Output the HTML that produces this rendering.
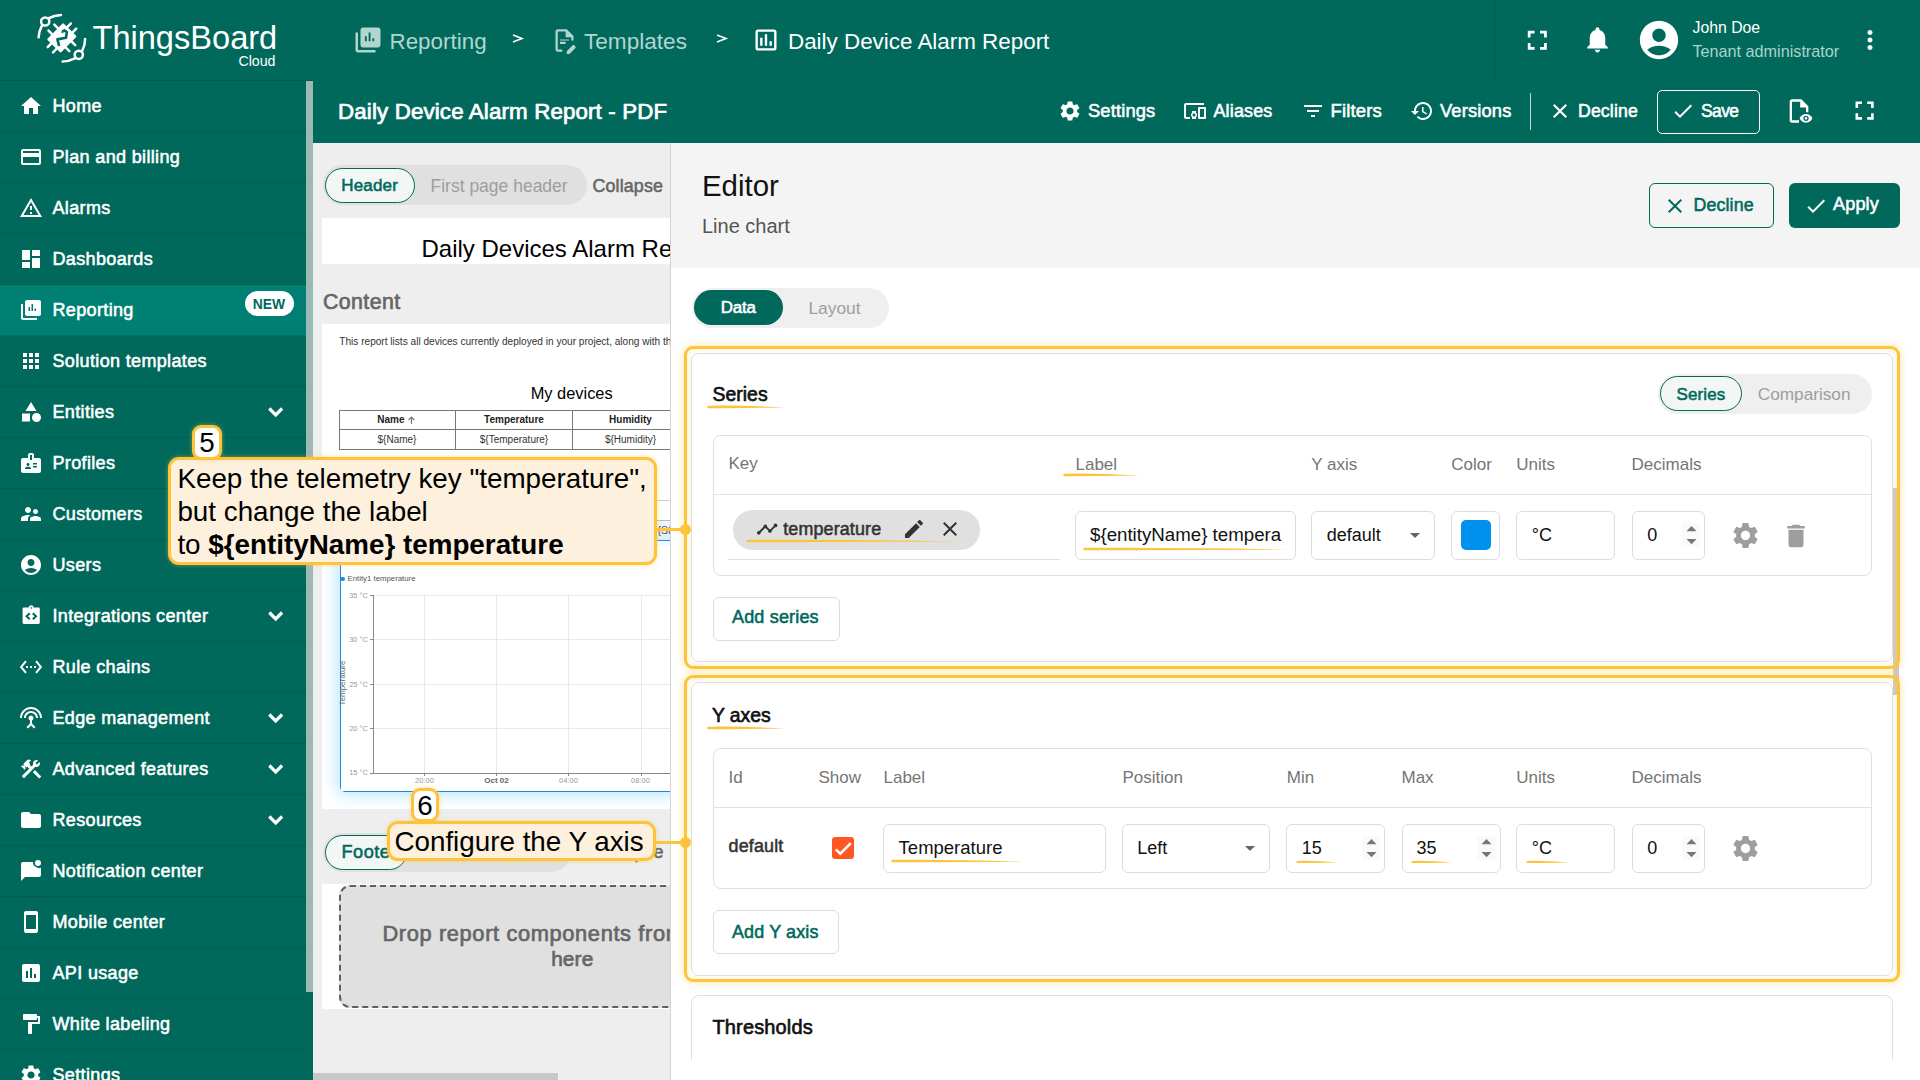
<!DOCTYPE html><html><head><meta charset="utf-8"><style>
*{margin:0;padding:0;box-sizing:border-box}
html,body{width:1920px;height:1080px;overflow:hidden;background:#fff;font-family:"Liberation Sans",sans-serif}
.t{position:absolute;white-space:nowrap}
svg{display:block}
</style></head><body>
<div style="position:absolute;left:0px;top:0px;width:1920px;height:143px;background:#00695c"></div>
<div style="position:absolute;left:0px;top:0px;width:313px;height:1080px;background:#00695c"></div>
<div style="position:absolute;left:1494px;top:0px;width:1px;height:80px;background:rgba(0,0,0,0.13)"></div>
<div style="position:absolute;left:0px;top:80px;width:313px;height:1px;background:rgba(0,0,0,0.12)"></div>
<svg style="position:absolute;left:30px;top:8px;overflow:visible;" width="65" height="62" viewBox="0 0 65 62">
<g fill="none" stroke="#fff" stroke-width="2.5" stroke-linecap="round">
<circle cx="15.2" cy="13.5" r="4.1"/>
<path d="M18.9 10.2 Q 24 7.3 31 6.9"/>
<path d="M11.9 17.6 Q 9 23 8.6 29.3"/>
<circle cx="48.8" cy="46.8" r="4.1"/>
<path d="M52.2 42.8 Q 55.2 37 55.1 31"/>
<path d="M45 50.3 Q 38.5 53.4 32.7 53.6"/>
</g>
<g transform="translate(31.85 29.85) rotate(44.4)">
<rect x="-9.6" y="-11.6" width="19.2" height="23.2" rx="1.2" fill="#fff"/>
<g stroke="#fff" stroke-width="2.5" stroke-linecap="round">
<path d="M-9 -4.2H-14.6M-9 4.2H-14.6M9 -4.2H14.6M9 4.2H14.6M-3.6 -11H-3.6V-16.6M3.9 -11V-16.6M-3.6 11V16.6M3.9 11V16.6"/>
</g>
</g>
<path d="M33.4 21.9 L36.9 24.1 L36 29.7 L27.4 31.4 L29.1 38" fill="none" stroke="#00695c" stroke-width="2.6" stroke-linejoin="round"/>
<path d="M33.4 21.9 L32.2 24.8" fill="none" stroke="#00695c" stroke-width="2.2"/>
</svg>
<div class="t" style="left:92.50px;top:17.10px;line-height:41px;font-size:32.6px;font-weight:400;color:#fff;">ThingsBoard</div>
<div class="t" style="left:-724.50px;width:1000px;text-align:right;top:51.68px;line-height:18px;font-size:14.2px;font-weight:400;color:#fff;">Cloud</div>
<svg style="position:absolute;left:352.7px;top:25px;" width="30" height="30" viewBox="0 0 24 24"><path fill="#b2d5cf" d="M4 6H2v14c0 1.1.9 2 2 2h14v-2H4V6zm16-4H8c-1.1 0-2 .9-2 2v12c0 1.1.9 2 2 2h12c1.1 0 2-.9 2-2V4c0-1.1-.9-2-2-2zM11 13H9.5V9H11v4zm3 0h-1.5V6H14v7zm3 0h-1.5v-2.5H17V13z"/></svg>
<div class="t" style="left:389.50px;top:27.63px;line-height:28px;font-size:22.4px;font-weight:400;color:#b2d5cf;">Reporting</div>
<svg style="position:absolute;left:512px;top:34px;overflow:visible;" width="11" height="9" viewBox="0 0 11 9"><path d="M1 1 L10 4.5 L1 8" fill="none" stroke="#fff" stroke-width="1.6"/></svg>
<svg style="position:absolute;left:551px;top:27px;" width="27" height="27" viewBox="0 0 24 24"><path fill="#b2d5cf" d="M14 2H6c-1.1 0-1.99.9-1.99 2L4 20c0 1.1.89 2 1.99 2H10v-2H6V4h7v5h5v3h2V8l-6-6zM8 12h8v-1H8v1zm0 3h5v-2H8v2zm13.7 2.3l-1-1c-.4-.4-1-.4-1.4 0l-5.3 5.3V24h2.4l5.3-5.3c.4-.4.4-1 0-1.4z"/></svg>
<div class="t" style="left:584.00px;top:27.56px;line-height:28px;font-size:22.6px;font-weight:400;color:#b2d5cf;">Templates</div>
<svg style="position:absolute;left:716px;top:34px;overflow:visible;" width="11" height="9" viewBox="0 0 11 9"><path d="M1 1 L10 4.5 L1 8" fill="none" stroke="#fff" stroke-width="1.6"/></svg>
<svg style="position:absolute;left:752px;top:26px;" width="28" height="28" viewBox="0 0 24 24"><path fill="#fff" d="M19 3H5c-1.1 0-2 .9-2 2v14c0 1.1.9 2 2 2h14c1.1 0 2-.9 2-2V5c0-1.1-.9-2-2-2zm0 16H5V5h14v14zM9 10H7v7h2v-7zm4-3h-2v10h2V7zm4 6h-2v4h2v-4z"/></svg>
<div class="t" style="left:788.00px;top:27.63px;line-height:28px;font-size:22.4px;font-weight:400;color:#fff;">Daily Device Alarm Report</div>
<svg style="position:absolute;left:1521.2px;top:24.2px;" width="32.6" height="32.6" viewBox="0 0 24 24"><path fill="#fff" d="M7 14H5v5h5v-2H7v-3zm-2-4h2V7h3V5H5v5zm12 7h-3v2h5v-5h-2v3zM14 5v2h3v3h2V5h-5z"/></svg>
<svg style="position:absolute;left:1581.8px;top:24.2px;" width="31" height="31" viewBox="0 0 24 24"><path fill="#fff" d="M12 22c1.1 0 2-.9 2-2h-4c0 1.1.89 2 2 2zm6-6v-5c0-3.07-1.64-5.64-4.5-6.32V4c0-.83-.67-1.5-1.5-1.5s-1.5.67-1.5 1.5v.68C7.63 5.36 6 7.92 6 11v5l-2 2v1h16v-1l-2-2z"/></svg>
<svg style="position:absolute;left:1636px;top:17px;" width="46" height="46" viewBox="0 0 24 24"><path fill="#fff" d="M12 2C6.48 2 2 6.48 2 12s4.48 10 10 10 10-4.48 10-10S17.52 2 12 2zm0 4c1.93 0 3.5 1.57 3.5 3.5S13.93 13 12 13s-3.5-1.57-3.5-3.5S10.07 6 12 6zm0 14c-2.03 0-4.43-.82-6.14-2.88C7.55 15.8 9.68 15 12 15s4.45.8 6.14 2.12C16.43 19.18 14.03 20 12 20z"/></svg>
<div class="t" style="left:1692.50px;top:17.52px;line-height:20px;font-size:15.8px;font-weight:400;color:#fff;">John Doe</div>
<div class="t" style="left:1692.50px;top:41.38px;line-height:20px;font-size:16.2px;font-weight:400;color:#a9d4cd;">Tenant administrator</div>
<svg style="position:absolute;left:1855px;top:25px;" width="30" height="30" viewBox="0 0 24 24"><path fill="#fff" d="M12 8c1.1 0 2-.9 2-2s-.9-2-2-2-2 .9-2 2 .9 2 2 2zm0 2c-1.1 0-2 .9-2 2s.9 2 2 2 2-.9 2-2-.9-2-2-2zm0 6c-1.1 0-2 .9-2 2s.9 2 2 2 2-.9 2-2-.9-2-2-2z"/></svg>
<div style="position:absolute;left:0px;top:131px;width:306px;height:1px;background:rgba(0,0,0,0.1)"></div>
<svg style="position:absolute;left:19px;top:93.5px;" width="24" height="24" viewBox="0 0 24 24"><path fill="#fff" d="M10 20v-6h4v6h5v-8h3L12 3 2 12h3v8z"/></svg>
<div class="t" style="left:52.50px;top:94.56px;line-height:22px;font-size:18px;font-weight:400;color:#fff;-webkit-text-stroke:0.55px #fff;letter-spacing:0.350px;">Home</div>
<div style="position:absolute;left:0px;top:182px;width:306px;height:1px;background:rgba(0,0,0,0.1)"></div>
<svg style="position:absolute;left:19px;top:144.5px;" width="24" height="24" viewBox="0 0 24 24"><path fill="#fff" d="M20 4H4c-1.11 0-1.99.89-1.99 2L2 18c0 1.11.89 2 2 2h16c1.11 0 2-.89 2-2V6c0-1.11-.89-2-2-2zm0 14H4v-6h16v6zm0-10H4V6h16v2z"/></svg>
<div class="t" style="left:52.50px;top:145.56px;line-height:22px;font-size:18px;font-weight:400;color:#fff;-webkit-text-stroke:0.55px #fff;letter-spacing:0.350px;">Plan and billing</div>
<div style="position:absolute;left:0px;top:233px;width:306px;height:1px;background:rgba(0,0,0,0.1)"></div>
<svg style="position:absolute;left:19px;top:195.5px;" width="24" height="24" viewBox="0 0 24 24"><path fill="#fff" d="M12 5.99L19.53 19H4.47L12 5.99M12 2L1 21h22L12 2zm1 14h-2v2h2v-2zm0-6h-2v4h2v-4z"/></svg>
<div class="t" style="left:52.50px;top:196.56px;line-height:22px;font-size:18px;font-weight:400;color:#fff;-webkit-text-stroke:0.55px #fff;letter-spacing:0.350px;">Alarms</div>
<div style="position:absolute;left:0px;top:284px;width:306px;height:1px;background:rgba(0,0,0,0.1)"></div>
<svg style="position:absolute;left:19px;top:246.5px;" width="24" height="24" viewBox="0 0 24 24"><path fill="#fff" d="M3 13h8V3H3v10zm0 8h8v-6H3v6zm10 0h8V11h-8v10zm0-18v6h8V3h-8z"/></svg>
<div class="t" style="left:52.50px;top:247.56px;line-height:22px;font-size:18px;font-weight:400;color:#fff;-webkit-text-stroke:0.55px #fff;letter-spacing:0.350px;">Dashboards</div>
<div style="position:absolute;left:0px;top:284.5px;width:306px;height:51px;background:#007f73"></div>
<div style="position:absolute;left:0px;top:335px;width:306px;height:1px;background:rgba(0,0,0,0.1)"></div>
<svg style="position:absolute;left:19px;top:297.5px;" width="24" height="24" viewBox="0 0 24 24"><path fill="#fff" d="M4 6H2v14c0 1.1.9 2 2 2h14v-2H4V6zm16-4H8c-1.1 0-2 .9-2 2v12c0 1.1.9 2 2 2h12c1.1 0 2-.9 2-2V4c0-1.1-.9-2-2-2zM11 13H9.5V9H11v4zm3 0h-1.5V6H14v7zm3 0h-1.5v-2.5H17V13z"/></svg>
<div class="t" style="left:52.50px;top:298.56px;line-height:22px;font-size:18px;font-weight:400;color:#fff;-webkit-text-stroke:0.55px #fff;letter-spacing:0.350px;">Reporting</div>
<div style="position:absolute;left:245px;top:290.5px;width:48.5px;height:25px;background:#fff;border-radius:13px"></div>
<div class="t" style="left:-231.00px;width:1000px;text-align:center;top:295.88px;line-height:17px;font-size:13.9px;font-weight:700;color:#00695c;">NEW</div>
<div style="position:absolute;left:0px;top:386px;width:306px;height:1px;background:rgba(0,0,0,0.1)"></div>
<svg style="position:absolute;left:19px;top:348.5px;" width="24" height="24" viewBox="0 0 24 24"><path fill="#fff" d="M4 8h4V4H4v4zm6 12h4v-4h-4v4zm-6 0h4v-4H4v4zm0-6h4v-4H4v4zm6 0h4v-4h-4v4zm6-10v4h4V4h-4zm-6 4h4V4h-4v4zm6 6h4v-4h-4v4zm0 6h4v-4h-4v4z"/></svg>
<div class="t" style="left:52.50px;top:349.56px;line-height:22px;font-size:18px;font-weight:400;color:#fff;-webkit-text-stroke:0.55px #fff;letter-spacing:0.350px;">Solution templates</div>
<div style="position:absolute;left:0px;top:437px;width:306px;height:1px;background:rgba(0,0,0,0.1)"></div>
<svg style="position:absolute;left:19px;top:399.5px;" width="24" height="24" viewBox="0 0 24 24"><path fill="#fff" d="M12 2l-5.5 9h11zM17.5 13a4.5 4.5 0 1 0 0 9 4.5 4.5 0 1 0 0-9zM3 13.5h8v8H3z"/></svg>
<div class="t" style="left:52.50px;top:400.56px;line-height:22px;font-size:18px;font-weight:400;color:#fff;-webkit-text-stroke:0.55px #fff;letter-spacing:0.350px;">Entities</div>
<svg style="position:absolute;left:265px;top:403.5px;overflow:visible;" width="22" height="14" viewBox="0 0 22 14"><path d="M4.3 4.5 L10.7 10.9 L17.1 4.5" fill="none" stroke="#fff" stroke-width="3.2"/></svg>
<div style="position:absolute;left:0px;top:488px;width:306px;height:1px;background:rgba(0,0,0,0.1)"></div>
<svg style="position:absolute;left:19px;top:450.5px;" width="24" height="24" viewBox="0 0 24 24"><path fill="#fff" d="M20 7h-5V4c0-1.1-.9-2-2-2h-2c-1.1 0-2 .9-2 2v3H4c-1.1 0-2 .9-2 2v11c0 1.1.9 2 2 2h16c1.1 0 2-.9 2-2V9c0-1.1-.9-2-2-2zM11 4h2v5h-2V4zM9 12c.83 0 1.5.67 1.5 1.5S9.83 15 9 15s-1.5-.67-1.5-1.5S8.17 12 9 12zm3 6H6v-.43c0-.6.36-1.15.92-1.39.64-.28 1.34-.43 2.08-.43s1.44.15 2.08.43c.55.24.92.78.92 1.39V18zm6-1.5h-4V15h4v1.5zm0-3h-4V12h4v1.5z"/></svg>
<div class="t" style="left:52.50px;top:451.56px;line-height:22px;font-size:18px;font-weight:400;color:#fff;-webkit-text-stroke:0.55px #fff;letter-spacing:0.350px;">Profiles</div>
<div style="position:absolute;left:0px;top:539px;width:306px;height:1px;background:rgba(0,0,0,0.1)"></div>
<svg style="position:absolute;left:19px;top:501.5px;" width="24" height="24" viewBox="0 0 24 24"><path fill="#fff" d="M16.5 12c1.38 0 2.49-1.12 2.49-2.5S17.88 7 16.5 7C15.12 7 14 8.12 14 9.5s1.12 2.5 2.5 2.5zM9 11c1.66 0 2.99-1.34 2.99-3S10.66 5 9 5C7.34 5 6 6.34 6 8s1.34 3 3 3zm7.5 3c-1.83 0-5.5.92-5.5 2.75V19h11v-2.25c0-1.83-3.67-2.75-5.5-2.75zM9 13c-2.34 0-7 1.17-7 3.5V19h7v-2.25c0-.85.33-2.34 2.37-3.47C10.5 13.1 9.66 13 9 13z"/></svg>
<div class="t" style="left:52.50px;top:502.56px;line-height:22px;font-size:18px;font-weight:400;color:#fff;-webkit-text-stroke:0.55px #fff;letter-spacing:0.350px;">Customers</div>
<div style="position:absolute;left:0px;top:590px;width:306px;height:1px;background:rgba(0,0,0,0.1)"></div>
<svg style="position:absolute;left:19px;top:552.5px;" width="24" height="24" viewBox="0 0 24 24"><path fill="#fff" d="M12 2C6.48 2 2 6.48 2 12s4.48 10 10 10 10-4.48 10-10S17.52 2 12 2zm0 4c1.93 0 3.5 1.57 3.5 3.5S13.93 13 12 13s-3.5-1.57-3.5-3.5S10.07 6 12 6zm0 14c-2.03 0-4.43-.82-6.14-2.88C7.55 15.8 9.68 15 12 15s4.45.8 6.14 2.12C16.43 19.18 14.03 20 12 20z"/></svg>
<div class="t" style="left:52.50px;top:553.56px;line-height:22px;font-size:18px;font-weight:400;color:#fff;-webkit-text-stroke:0.55px #fff;letter-spacing:0.350px;">Users</div>
<div style="position:absolute;left:0px;top:641px;width:306px;height:1px;background:rgba(0,0,0,0.1)"></div>
<svg style="position:absolute;left:22px;top:605.0px;overflow:visible;" width="18" height="21" viewBox="0 0 18 21"><rect x="0.6" y="2.4" width="17.2" height="16.5" rx="1.3" fill="#fff"/><circle cx="9.2" cy="2.6" r="2.4" fill="#fff"/><circle cx="9.2" cy="3" r="0.8" fill="#00695c"/><path d="M7.8 8.3 L4.6 11.3 L7.8 14.3 M10.8 8.3 L14 11.3 L10.8 14.3" fill="none" stroke="#00695c" stroke-width="2"/></svg>
<div class="t" style="left:52.50px;top:604.56px;line-height:22px;font-size:18px;font-weight:400;color:#fff;-webkit-text-stroke:0.55px #fff;letter-spacing:0.350px;">Integrations center</div>
<svg style="position:absolute;left:265px;top:607.5px;overflow:visible;" width="22" height="14" viewBox="0 0 22 14"><path d="M4.3 4.5 L10.7 10.9 L17.1 4.5" fill="none" stroke="#fff" stroke-width="3.2"/></svg>
<div style="position:absolute;left:0px;top:692px;width:306px;height:1px;background:rgba(0,0,0,0.1)"></div>
<svg style="position:absolute;left:19px;top:654.5px;" width="24" height="24" viewBox="0 0 24 24"><path fill="#fff" d="M7.77 6.76L6.23 5.48.82 12l5.41 6.52 1.54-1.28L3.42 12l4.35-5.24zM7 13h2v-2H7v2zm10-2h-2v2h2v-2zm-6 2h2v-2h-2v2zm6.77-7.52l-1.54 1.28L20.58 12l-4.35 5.24 1.54 1.28L23.18 12l-5.41-6.52z"/></svg>
<div class="t" style="left:52.50px;top:655.56px;line-height:22px;font-size:18px;font-weight:400;color:#fff;-webkit-text-stroke:0.55px #fff;letter-spacing:0.350px;">Rule chains</div>
<div style="position:absolute;left:0px;top:743px;width:306px;height:1px;background:rgba(0,0,0,0.1)"></div>
<svg style="position:absolute;left:19px;top:705.5px;" width="24" height="24" viewBox="0 0 24 24"><path fill="#fff" d="M12 5c-3.87 0-7 3.13-7 7h2c0-2.76 2.24-5 5-5s5 2.24 5 5h2c0-3.87-3.13-7-7-7zm1 9.29c.88-.39 1.5-1.26 1.5-2.29 0-1.38-1.12-2.5-2.5-2.5S9.5 10.62 9.5 12c0 1.02.62 1.9 1.5 2.29v3.3L7.59 21 9 22.41l3-3 3 3L16.41 21 13 17.59v-3.3zM12 1C5.93 1 1 5.93 1 12h2c0-4.97 4.03-9 9-9s9 4.03 9 9h2c0-6.07-4.93-11-11-11z"/></svg>
<div class="t" style="left:52.50px;top:706.56px;line-height:22px;font-size:18px;font-weight:400;color:#fff;-webkit-text-stroke:0.55px #fff;letter-spacing:0.350px;">Edge management</div>
<svg style="position:absolute;left:265px;top:709.5px;overflow:visible;" width="22" height="14" viewBox="0 0 22 14"><path d="M4.3 4.5 L10.7 10.9 L17.1 4.5" fill="none" stroke="#fff" stroke-width="3.2"/></svg>
<div style="position:absolute;left:0px;top:794px;width:306px;height:1px;background:rgba(0,0,0,0.1)"></div>
<svg style="position:absolute;left:19px;top:756.5px;" width="24" height="24" viewBox="0 0 24 24"><path fill="#fff" d="M13.78 15.17l2.12-2.12 6.36 6.36-2.12 2.12zM17.5 10c1.93 0 3.5-1.57 3.5-3.5 0-.58-.16-1.12-.41-1.6l-2.7 2.7-1.49-1.49 2.7-2.7c-.48-.25-1.02-.41-1.6-.41C15.57 3 14 4.57 14 6.5c0 .41.08.8.21 1.16l-1.85 1.85-1.78-1.78.71-.71-1.41-1.41L12 3.49a3 3 0 0 0-4.24 0L4.22 7.03l1.41 1.41H2.81l-.71.71 3.54 3.54.71-.71V9.15l1.41 1.41.71-.71 1.78 1.78-7.41 7.41 2.12 2.12L16.34 9.79c.36.13.75.21 1.16.21z"/></svg>
<div class="t" style="left:52.50px;top:757.56px;line-height:22px;font-size:18px;font-weight:400;color:#fff;-webkit-text-stroke:0.55px #fff;letter-spacing:0.350px;">Advanced features</div>
<svg style="position:absolute;left:265px;top:760.5px;overflow:visible;" width="22" height="14" viewBox="0 0 22 14"><path d="M4.3 4.5 L10.7 10.9 L17.1 4.5" fill="none" stroke="#fff" stroke-width="3.2"/></svg>
<div style="position:absolute;left:0px;top:845px;width:306px;height:1px;background:rgba(0,0,0,0.1)"></div>
<svg style="position:absolute;left:19px;top:807.5px;" width="24" height="24" viewBox="0 0 24 24"><path fill="#fff" d="M10 4H4c-1.1 0-1.99.9-1.99 2L2 18c0 1.1.9 2 2 2h16c1.1 0 2-.9 2-2V8c0-1.1-.9-2-2-2h-8l-2-2z"/></svg>
<div class="t" style="left:52.50px;top:808.56px;line-height:22px;font-size:18px;font-weight:400;color:#fff;-webkit-text-stroke:0.55px #fff;letter-spacing:0.350px;">Resources</div>
<svg style="position:absolute;left:265px;top:811.5px;overflow:visible;" width="22" height="14" viewBox="0 0 22 14"><path d="M4.3 4.5 L10.7 10.9 L17.1 4.5" fill="none" stroke="#fff" stroke-width="3.2"/></svg>
<div style="position:absolute;left:0px;top:896px;width:306px;height:1px;background:rgba(0,0,0,0.1)"></div>
<svg style="position:absolute;left:19px;top:858.5px;" width="24" height="24" viewBox="0 0 24 24"><path fill="#fff" d="M19 7a3 3 0 1 0 0-6 3 3 0 0 0 0 6zM17.1 8.1A5 5 0 0 1 14.1 3H4c-1.1 0-2 .9-2 2v17l4-4h14c1.1 0 2-.9 2-2V8.8a5 5 0 0 1-4.9-.7z"/></svg>
<div class="t" style="left:52.50px;top:859.56px;line-height:22px;font-size:18px;font-weight:400;color:#fff;-webkit-text-stroke:0.55px #fff;letter-spacing:0.350px;">Notification center</div>
<div style="position:absolute;left:0px;top:947px;width:306px;height:1px;background:rgba(0,0,0,0.1)"></div>
<svg style="position:absolute;left:19px;top:909.5px;" width="24" height="24" viewBox="0 0 24 24"><path fill="#fff" d="M17 1.01L7 1c-1.1 0-2 .9-2 2v18c0 1.1.9 2 2 2h10c1.1 0 2-.9 2-2V3c0-1.1-.9-1.99-2-1.99zM17 19H7V5h10v14z"/></svg>
<div class="t" style="left:52.50px;top:910.56px;line-height:22px;font-size:18px;font-weight:400;color:#fff;-webkit-text-stroke:0.55px #fff;letter-spacing:0.350px;">Mobile center</div>
<div style="position:absolute;left:0px;top:998px;width:306px;height:1px;background:rgba(0,0,0,0.1)"></div>
<svg style="position:absolute;left:19px;top:960.5px;" width="24" height="24" viewBox="0 0 24 24"><path fill="#fff" d="M19 3H5c-1.1 0-2 .9-2 2v14c0 1.1.9 2 2 2h14c1.1 0 2-.9 2-2V5c0-1.1-.9-2-2-2zM9 17H7v-7h2v7zm4 0h-2V7h2v10zm4 0h-2v-4h2v4z"/></svg>
<div class="t" style="left:52.50px;top:961.56px;line-height:22px;font-size:18px;font-weight:400;color:#fff;-webkit-text-stroke:0.55px #fff;letter-spacing:0.350px;">API usage</div>
<div style="position:absolute;left:0px;top:1049px;width:306px;height:1px;background:rgba(0,0,0,0.1)"></div>
<svg style="position:absolute;left:19px;top:1011.5px;" width="24" height="24" viewBox="0 0 24 24"><path fill="#fff" d="M18 4V3c0-.55-.45-1-1-1H5c-.55 0-1 .45-1 1v4c0 .55.45 1 1 1h12c.55 0 1-.45 1-1V6h1v4H9v11c0 .55.45 1 1 1h2c.55 0 1-.45 1-1v-9h8V4h-3z"/></svg>
<div class="t" style="left:52.50px;top:1012.56px;line-height:22px;font-size:18px;font-weight:400;color:#fff;-webkit-text-stroke:0.55px #fff;letter-spacing:0.350px;">White labeling</div>
<div style="position:absolute;left:0px;top:1100px;width:306px;height:1px;background:rgba(0,0,0,0.1)"></div>
<svg style="position:absolute;left:19px;top:1062.5px;" width="24" height="24" viewBox="0 0 24 24"><path fill="#fff" d="M19.14 12.94c.04-.3.06-.61.06-.94 0-.32-.02-.64-.07-.94l2.03-1.58c.18-.14.23-.41.12-.61l-1.92-3.32c-.12-.22-.37-.29-.59-.22l-2.39.96c-.5-.38-1.03-.7-1.62-.94l-.36-2.54c-.04-.24-.24-.41-.48-.41h-3.84c-.24 0-.43.17-.47.41l-.36 2.54c-.59.24-1.13.57-1.62.94l-2.39-.96c-.22-.08-.47 0-.59.22L2.74 8.87c-.12.21-.08.47.12.61l2.03 1.58c-.05.3-.09.63-.09.94s.02.64.07.94l-2.03 1.58c-.18.14-.23.41-.12.61l1.92 3.32c.12.22.37.29.59.22l2.39-.96c.5.38 1.03.7 1.62.94l.36 2.54c.05.24.24.41.48.41h3.84c.24 0 .44-.17.47-.41l.36-2.54c.59-.24 1.13-.56 1.62-.94l2.39.96c.22.08.47 0 .59-.22l1.92-3.32c.12-.22.07-.47-.12-.61l-2.01-1.58zM12 15.6c-1.98 0-3.6-1.62-3.6-3.6s1.62-3.6 3.6-3.6 3.6 1.62 3.6 3.6-1.62 3.6-3.6 3.6z"/></svg>
<div class="t" style="left:52.50px;top:1063.56px;line-height:22px;font-size:18px;font-weight:400;color:#fff;-webkit-text-stroke:0.55px #fff;letter-spacing:0.350px;">Settings</div>
<div style="position:absolute;left:306px;top:81px;width:7px;height:911px;background:#9cbab5"></div>
<div class="t" style="left:338.00px;top:97.77px;line-height:28px;font-size:22.3px;font-weight:400;color:#fff;-webkit-text-stroke:0.7431696289500064px #fff;letter-spacing:0.150px;">Daily Device Alarm Report - PDF</div>
<svg style="position:absolute;left:1058px;top:99px;" width="24" height="24" viewBox="0 0 24 24"><path fill="#fff" d="M19.14 12.94c.04-.3.06-.61.06-.94 0-.32-.02-.64-.07-.94l2.03-1.58c.18-.14.23-.41.12-.61l-1.92-3.32c-.12-.22-.37-.29-.59-.22l-2.39.96c-.5-.38-1.03-.7-1.62-.94l-.36-2.54c-.04-.24-.24-.41-.48-.41h-3.84c-.24 0-.43.17-.47.41l-.36 2.54c-.59.24-1.13.57-1.62.94l-2.39-.96c-.22-.08-.47 0-.59.22L2.74 8.87c-.12.21-.08.47.12.61l2.03 1.58c-.05.3-.09.63-.09.94s.02.64.07.94l-2.03 1.58c-.18.14-.23.41-.12.61l1.92 3.32c.12.22.37.29.59.22l2.39-.96c.5.38 1.03.7 1.62.94l.36 2.54c.05.24.24.41.48.41h3.84c.24 0 .44-.17.47-.41l.36-2.54c.59-.24 1.13-.56 1.62-.94l2.39.96c.22.08.47 0 .59-.22l1.92-3.32c.12-.22.07-.47-.12-.61l-2.01-1.58zM12 15.6c-1.98 0-3.6-1.62-3.6-3.6s1.62-3.6 3.6-3.6 3.6 1.62 3.6 3.6-1.62 3.6-3.6 3.6z"/></svg>
<div class="t" style="left:1088.00px;top:99.14px;line-height:23px;font-size:18.33px;font-weight:400;color:#fff;-webkit-text-stroke:0.55px #fff;letter-spacing:0.150px;">Settings</div>
<svg style="position:absolute;left:1183px;top:99px;" width="24" height="24" viewBox="0 0 24 24"><path fill="#fff" d="M3 6h18V4H3c-1.1 0-2 .9-2 2v12c0 1.1.9 2 2 2h4v-2H3V6zm10 6H9v1.78c-.61.55-1 1.33-1 2.22s.39 1.67 1 2.22V20h4v-1.78c.61-.55 1-1.34 1-2.22s-.39-1.67-1-2.22V12zm-2 5.5c-.83 0-1.5-.67-1.5-1.5s.67-1.5 1.5-1.5 1.5.67 1.5 1.5-.67 1.5-1.5 1.5zM22 8h-6c-.5 0-1 .5-1 1v10c0 .5.5 1 1 1h6c.5 0 1-.5 1-1V9c0-.5-.5-1-1-1zm-1 10h-4v-8h4v8z"/></svg>
<div class="t" style="left:1213.50px;top:100.37px;line-height:22px;font-size:17.96px;font-weight:400;color:#fff;-webkit-text-stroke:0.55px #fff;letter-spacing:0.150px;">Aliases</div>
<svg style="position:absolute;left:1301px;top:99px;" width="24" height="24" viewBox="0 0 24 24"><path fill="#fff" d="M10 18h4v-2h-4v2zM3 6v2h18V6H3zm3 7h12v-2H6v2z"/></svg>
<div class="t" style="left:1330.50px;top:99.08px;line-height:23px;font-size:18.51px;font-weight:400;color:#fff;-webkit-text-stroke:0.55px #fff;letter-spacing:0.150px;">Filters</div>
<svg style="position:absolute;left:1410px;top:98.5px;" width="24" height="24" viewBox="0 0 24 24"><path fill="#fff" d="M13 3c-4.97 0-9 4.03-9 9H1l3.89 3.89.07.14L9 12H6c0-3.87 3.13-7 7-7s7 3.13 7 7-3.13 7-7 7c-1.93 0-3.68-.79-4.94-2.06l-1.42 1.42C8.27 19.99 10.51 21 13 21c4.97 0 9-4.03 9-9s-4.03-9-9-9zm-1 5v5l4.28 2.54.72-1.21-3.5-2.08V8H12z"/></svg>
<div class="t" style="left:1440.00px;top:99.15px;line-height:23px;font-size:18.32px;font-weight:400;color:#fff;-webkit-text-stroke:0.55px #fff;letter-spacing:0.150px;">Versions</div>
<div style="position:absolute;left:1530px;top:93px;width:1.3px;height:37px;background:rgba(255,255,255,0.75)"></div>
<svg style="position:absolute;left:1548px;top:99px;" width="24" height="24" viewBox="0 0 24 24"><path fill="#fff" d="M19 6.41L17.59 5 12 10.59 6.41 5 5 6.41 10.59 12 5 17.59 6.41 19 12 13.41 17.59 19 19 17.59 13.41 12z"/></svg>
<div class="t" style="left:1578.00px;top:100.38px;line-height:22px;font-size:17.66px;font-weight:400;color:#fff;-webkit-text-stroke:0.55px #fff;letter-spacing:0.150px;">Decline</div>
<div style="position:absolute;left:1657px;top:89.5px;width:103px;height:44.5px;border:1.3px solid #fff;border-radius:5px"></div>
<svg style="position:absolute;left:1671px;top:99px;" width="24" height="24" viewBox="0 0 24 24"><path fill="#fff" d="M9 16.17L4.83 12l-1.42 1.41L9 19 21 7l-1.41-1.41z"/></svg>
<div class="t" style="left:1701.00px;top:100.45px;line-height:22px;font-size:17.46px;font-weight:400;color:#fff;-webkit-text-stroke:0.55px #fff;letter-spacing:-0.587px;">Save</div>
<svg style="position:absolute;left:1785px;top:97px;" width="28" height="28" viewBox="0 0 24 24"><path fill="#fff" d="M14 2H6c-1.1 0-1.99.9-1.99 2L4 20c0 1.1.89 2 1.99 2H12v-2H6V4h7v5h5v4h2V8l-6-6zM18 14.5c-2.5 0-4.6 1.5-5.5 3.75.9 2.25 3 3.75 5.5 3.75s4.6-1.5 5.5-3.75c-.9-2.25-3-3.75-5.5-3.75zm0 6a2.25 2.25 0 1 1 0-4.5 2.25 2.25 0 0 1 0 4.5zm0-3.4a1.15 1.15 0 1 0 0 2.3 1.15 1.15 0 0 0 0-2.3z"/></svg>
<svg style="position:absolute;left:1849.3px;top:95.4px;" width="31.2" height="31.2" viewBox="0 0 24 24"><path fill="#fff" d="M7 14H5v5h5v-2H7v-3zm-2-4h2V7h3V5H5v5zm12 7h-3v2h5v-5h-2v3zM14 5v2h3v3h2V5h-5z"/></svg>
<div style="position:absolute;left:313px;top:143px;width:358px;height:937px;background:#eeeeee"></div>
<div style="position:absolute;left:322.5px;top:165px;width:264px;height:40px;background:#e0e0e0;border-radius:20px"></div>
<div style="position:absolute;left:325px;top:168px;width:90px;height:35px;background:#f2f7f6;border:1.5px solid #00695c;border-radius:18px"></div>
<div class="t" style="left:341.30px;top:175.30px;line-height:21px;font-size:17.03px;font-weight:400;color:#00695c;-webkit-text-stroke:0.55px #00695c;letter-spacing:0.150px;">Header</div>
<div class="t" style="left:430.50px;top:174.63px;line-height:22px;font-size:17.5px;font-weight:400;color:#9e9e9e;">First page header</div>
<div class="t" style="left:592.40px;top:174.50px;line-height:22px;font-size:17.87px;font-weight:400;color:#666;-webkit-text-stroke:0.55px #666;letter-spacing:0.150px;">Collapse</div>
<div style="position:absolute;left:322px;top:218px;width:349px;height:46px;background:#fff"></div>
<div class="t" style="left:421.50px;top:233.68px;line-height:30px;font-size:24px;font-weight:400;color:#000;">Daily Devices Alarm Report</div>
<div class="t" style="left:323.00px;top:288.61px;line-height:27px;font-size:21.32px;font-weight:400;color:#666;-webkit-text-stroke:0.6684743127505126px #666;letter-spacing:0.423px;">Content</div>
<div style="position:absolute;left:322px;top:324px;width:349px;height:485px;background:#fff"></div>
<div class="t" style="left:339.30px;top:335.00px;line-height:13px;font-size:10.1px;font-weight:400;color:#333;">This report lists all devices currently deployed in your project, along with their</div>
<div class="t" style="left:530.70px;top:383.11px;line-height:20px;font-size:16.4px;font-weight:400;color:#000;">My devices</div>
<div style="position:absolute;left:339px;top:410px;width:340px;height:40px;border:1.2px solid #777;border-right:none"></div>
<div style="position:absolute;left:339px;top:429px;width:340px;height:1.2px;background:#777"></div>
<div style="position:absolute;left:455px;top:410px;width:1.2px;height:40px;background:#777"></div>
<div style="position:absolute;left:572px;top:410px;width:1.2px;height:40px;background:#777"></div>
<div class="t" style="left:-109.10px;width:1000px;text-align:center;top:414.03px;line-height:12px;font-size:10px;font-weight:700;color:#222;">Name</div>
<svg style="position:absolute;left:407.5px;top:415.5px;overflow:visible;" width="7" height="8" viewBox="0 0 7 8"><path d="M3.5 8V1.2M0.6 4L3.5 1.1L6.4 4" fill="none" stroke="#777" stroke-width="1.2"/></svg>
<div class="t" style="left:14.00px;width:1000px;text-align:center;top:414.03px;line-height:12px;font-size:10px;font-weight:700;color:#222;">Temperature</div>
<div class="t" style="left:130.50px;width:1000px;text-align:center;top:414.03px;line-height:12px;font-size:10px;font-weight:700;color:#222;">Humidity</div>
<div class="t" style="left:-103.00px;width:1000px;text-align:center;top:433.53px;line-height:12px;font-size:10px;font-weight:400;color:#333;">${Name}</div>
<div class="t" style="left:14.00px;width:1000px;text-align:center;top:433.53px;line-height:12px;font-size:10px;font-weight:400;color:#333;">${Temperature}</div>
<div class="t" style="left:130.50px;width:1000px;text-align:center;top:433.53px;line-height:12px;font-size:10px;font-weight:400;color:#333;">${Humidity}</div>
<div style="position:absolute;left:339px;top:500px;width:332px;height:1px;background:#ccc"></div>
<div style="position:absolute;left:657px;top:519.5px;width:14px;height:21.5px;background:linear-gradient(#f5f5f5,#dff0fb);border-top:1px solid #bbb;border-bottom:1.6px solid #1e88e5"></div>
<div class="t" style="left:657.50px;top:523.86px;line-height:13px;font-size:10.5px;font-weight:400;color:#456;">{St</div>
<div style="position:absolute;left:322px;top:470px;width:349px;height:339px;overflow:hidden"><div style="position:absolute;left:17.5px;top:85px;width:360px;height:237px;border:1.6px solid #1e88e5;border-radius:5px;box-shadow:0 0 16px 3px rgba(0,170,240,0.28)"></div></div>
<div style="position:absolute;left:341px;top:546px;width:330px;height:245px;background:#fff"></div>
<div style="position:absolute;left:340px;top:576.5px;width:4.5px;height:4.5px;background:#1e88e5;border-radius:50%"></div>
<div class="t" style="left:347.50px;top:573.80px;line-height:10px;font-size:7.8px;font-weight:400;color:#555;">Entity1 temperature</div>
<div class="t" style="left:-632.00px;width:1000px;text-align:right;top:590.70px;line-height:9px;font-size:7.5px;font-weight:400;color:#999;">35 °C</div>
<div style="position:absolute;left:370px;top:595.0px;width:3px;height:1px;background:#888"></div>
<div style="position:absolute;left:373px;top:595.0px;width:298px;height:1px;background:#e9e9e9"></div>
<div class="t" style="left:-632.00px;width:1000px;text-align:right;top:635.10px;line-height:9px;font-size:7.5px;font-weight:400;color:#999;">30 °C</div>
<div style="position:absolute;left:370px;top:639.4px;width:3px;height:1px;background:#888"></div>
<div style="position:absolute;left:373px;top:639.4px;width:298px;height:1px;background:#e9e9e9"></div>
<div class="t" style="left:-632.00px;width:1000px;text-align:right;top:679.50px;line-height:9px;font-size:7.5px;font-weight:400;color:#999;">25 °C</div>
<div style="position:absolute;left:370px;top:683.8px;width:3px;height:1px;background:#888"></div>
<div style="position:absolute;left:373px;top:683.8px;width:298px;height:1px;background:#e9e9e9"></div>
<div class="t" style="left:-632.00px;width:1000px;text-align:right;top:723.90px;line-height:9px;font-size:7.5px;font-weight:400;color:#999;">20 °C</div>
<div style="position:absolute;left:370px;top:728.2px;width:3px;height:1px;background:#888"></div>
<div style="position:absolute;left:373px;top:728.2px;width:298px;height:1px;background:#e9e9e9"></div>
<div class="t" style="left:-632.00px;width:1000px;text-align:right;top:768.30px;line-height:9px;font-size:7.5px;font-weight:400;color:#999;">15 °C</div>
<div style="position:absolute;left:370px;top:772.6px;width:3px;height:1px;background:#888"></div>
<div style="position:absolute;left:373px;top:772.6px;width:298px;height:1px;background:#e9e9e9"></div>
<div style="position:absolute;left:424.25px;top:595px;width:1px;height:178px;background:#e9e9e9"></div>
<div style="position:absolute;left:424.25px;top:773px;width:1px;height:3px;background:#888"></div>
<div style="position:absolute;left:496.25px;top:595px;width:1px;height:178px;background:#e9e9e9"></div>
<div style="position:absolute;left:496.25px;top:773px;width:1px;height:3px;background:#888"></div>
<div style="position:absolute;left:568.25px;top:595px;width:1px;height:178px;background:#e9e9e9"></div>
<div style="position:absolute;left:568.25px;top:773px;width:1px;height:3px;background:#888"></div>
<div style="position:absolute;left:640.5px;top:595px;width:1px;height:178px;background:#e9e9e9"></div>
<div style="position:absolute;left:640.5px;top:773px;width:1px;height:3px;background:#888"></div>
<div style="position:absolute;left:373px;top:595px;width:1px;height:178px;background:#888"></div>
<div style="position:absolute;left:373px;top:773px;width:298px;height:1px;background:#888"></div>
<div class="t" style="left:-75.50px;width:1000px;text-align:center;top:775.90px;line-height:9px;font-size:7.5px;font-weight:400;color:#999;">20:00</div>
<div class="t" style="left:-3.50px;width:1000px;text-align:center;top:776.23px;line-height:10px;font-size:8px;font-weight:700;color:#666;">Oct 02</div>
<div class="t" style="left:68.50px;width:1000px;text-align:center;top:775.90px;line-height:9px;font-size:7.5px;font-weight:400;color:#999;">04:00</div>
<div class="t" style="left:140.50px;width:1000px;text-align:center;top:775.90px;line-height:9px;font-size:7.5px;font-weight:400;color:#999;">08:00</div>
<div class="t" style="left:313px;top:678px;width:60px;text-align:center;font-size:8px;line-height:10px;color:#666;transform:rotate(-90deg)">Temperature</div>
<div style="position:absolute;left:322.5px;top:833px;width:248px;height:39px;background:#e0e0e0;border-radius:20px"></div>
<div style="position:absolute;left:325px;top:834.5px;width:82px;height:35px;background:#f2f7f6;border:1.5px solid #00695c;border-radius:18px"></div>
<div class="t" style="left:341.50px;top:840.69px;line-height:23px;font-size:18.2px;font-weight:400;color:#00695c;-webkit-text-stroke:0.55px #00695c;letter-spacing:0.475px;">Footer</div>
<div class="t" style="left:-336.30px;width:1000px;text-align:right;top:841.30px;line-height:22px;font-size:17.87px;font-weight:400;color:#666;-webkit-text-stroke:0.55px #666;letter-spacing:0.150px;">Collapse</div>
<div style="position:absolute;left:322px;top:884px;width:349px;height:125px;background:#fff"></div>
<div style="position:absolute;left:339px;top:884.5px;width:400px;height:123.5px;background:#e0e0e0;border:2px dashed #5f5f5f;border-radius:11px"></div>
<div class="t" style="left:382.40px;top:919.93px;line-height:27px;font-size:21.84px;font-weight:400;color:#666;-webkit-text-stroke:0.6930792135797297px #666;letter-spacing:0.631px;">Drop report components from</div>
<div class="t" style="left:72.30px;width:1000px;text-align:center;top:946.47px;line-height:26px;font-size:20.84px;font-weight:400;color:#666;-webkit-text-stroke:0.6930792135797297px #666;letter-spacing:0.150px;">here</div>
<div style="position:absolute;left:313px;top:1073px;width:245px;height:7px;background:#c8c8c8"></div>
<div style="position:absolute;left:670px;top:143px;width:1px;height:937px;background:#d3d3d3"></div>
<div style="position:absolute;left:671px;top:143px;width:1249px;height:937px;background:#fff"></div>
<div style="position:absolute;left:671px;top:143px;width:1249px;height:125px;background:#f4f4f4"></div>
<div class="t" style="left:702.00px;top:167.41px;line-height:37px;font-size:29.4px;font-weight:400;color:#111;">Editor</div>
<div class="t" style="left:702.00px;top:214.17px;line-height:25px;font-size:20px;font-weight:400;color:#555;">Line chart</div>
<div style="position:absolute;left:1649px;top:183px;width:125px;height:45px;border:1.3px solid #00695c;border-radius:6px"></div>
<svg style="position:absolute;left:1663px;top:193.5px;" width="24" height="24" viewBox="0 0 24 24"><path fill="#00695c" d="M19 6.41L17.59 5 12 10.59 6.41 5 5 6.41 10.59 12 5 17.59 6.41 19 12 13.41 17.59 19 19 17.59 13.41 12z"/></svg>
<div class="t" style="left:1693.40px;top:193.63px;line-height:22px;font-size:17.81px;font-weight:400;color:#00695c;-webkit-text-stroke:0.55px #00695c;letter-spacing:0.150px;">Decline</div>
<div style="position:absolute;left:1789px;top:183px;width:111px;height:45px;background:#00695c;border-radius:6px"></div>
<svg style="position:absolute;left:1804px;top:193.5px;" width="24" height="24" viewBox="0 0 24 24"><path fill="#fff" d="M9 16.17L4.83 12l-1.42 1.41L9 19 21 7l-1.41-1.41z"/></svg>
<div class="t" style="left:1833.00px;top:193.04px;line-height:23px;font-size:18.07px;font-weight:400;color:#fff;-webkit-text-stroke:0.55px #fff;letter-spacing:0.150px;">Apply</div>
<div style="position:absolute;left:691.5px;top:288px;width:197.5px;height:40px;background:#efefef;border-radius:20px"></div>
<div style="position:absolute;left:694px;top:290px;width:89px;height:35px;background:#00695c;border-radius:18px"></div>
<div class="t" style="left:238.20px;width:1000px;text-align:center;top:297.22px;line-height:21px;font-size:16.97px;font-weight:400;color:#fff;-webkit-text-stroke:0.55px #fff;letter-spacing:-0.202px;">Data</div>
<div class="t" style="left:808.40px;top:296.57px;line-height:22px;font-size:17.4px;font-weight:400;color:#9e9e9e;">Layout</div>
<div style="position:absolute;left:1892.5px;top:488px;width:6px;height:207px;background:#cfcac2"></div>
<div style="position:absolute;left:691px;top:353px;width:1202px;height:309px;border:1px solid #e0e0e0;border-radius:8px"></div>
<div style="position:absolute;left:684px;top:346px;width:1216px;height:323px;border:3.2px solid #fdc43b;border-radius:9px;box-shadow:0 0 6px 2px rgba(251,193,58,0.28), inset 0 0 5px 2px rgba(251,193,58,0.18)"></div>
<div class="t" style="left:712.40px;top:381.97px;line-height:24px;font-size:19.4px;font-weight:400;color:#111;-webkit-text-stroke:0.644167671515781px #111;letter-spacing:0.061px;">Series</div>
<svg style="position:absolute;left:707px;top:403.8px;overflow:visible;" width="78" height="6" viewBox="0 0 78 6"><path d="M1.5 1.7 Q 35.1 1.1 78 3.6 Q 35.1 4.1 1.5 4.3 A 1.3 1.3 0 0 1 1.5 1.7 Z" fill="#fdc43b"/></svg>
<div style="position:absolute;left:1658px;top:374px;width:214px;height:40px;background:#efefef;border-radius:20px"></div>
<div style="position:absolute;left:1660px;top:376px;width:82px;height:35px;background:#f2f7f6;border:1.5px solid #00695c;border-radius:18px"></div>
<div class="t" style="left:1201.00px;width:1000px;text-align:center;top:383.62px;line-height:21px;font-size:16.97px;font-weight:400;color:#00695c;-webkit-text-stroke:0.55px #00695c;letter-spacing:0.122px;">Series</div>
<div class="t" style="left:1757.80px;top:383.04px;line-height:22px;font-size:17.2px;font-weight:400;color:#9e9e9e;">Comparison</div>
<div style="position:absolute;left:712.5px;top:434.5px;width:1159.5px;height:141px;border:1px solid #e0e0e0;border-radius:8px"></div>
<div style="position:absolute;left:713px;top:494px;width:1158px;height:1px;background:#e0e0e0"></div>
<div class="t" style="left:728.50px;top:453.21px;line-height:21px;font-size:17px;font-weight:400;color:#757575;">Key</div>
<div class="t" style="left:1075.50px;top:453.51px;line-height:21px;font-size:17px;font-weight:400;color:#757575;">Label</div>
<svg style="position:absolute;left:1063px;top:472.4px;overflow:visible;" width="77" height="6" viewBox="0 0 77 6"><path d="M1.5 1.7 Q 34.65 1.1 77 3.6 Q 34.65 4.1 1.5 4.3 A 1.3 1.3 0 0 1 1.5 1.7 Z" fill="#fdc43b"/></svg>
<div class="t" style="left:1311.30px;top:453.61px;line-height:21px;font-size:17px;font-weight:400;color:#757575;">Y axis</div>
<div class="t" style="left:1451.30px;top:453.61px;line-height:21px;font-size:17px;font-weight:400;color:#757575;">Color</div>
<div class="t" style="left:1516.30px;top:453.61px;line-height:21px;font-size:17px;font-weight:400;color:#757575;">Units</div>
<div class="t" style="left:1631.60px;top:453.61px;line-height:21px;font-size:17px;font-weight:400;color:#757575;">Decimals</div>
<div style="position:absolute;left:728px;top:559px;width:332px;height:1px;background:#e0e0e0"></div>
<div style="position:absolute;left:733px;top:510px;width:247px;height:40px;background:#e0e0e0;border-radius:20px"></div>
<svg style="position:absolute;left:755.5px;top:518.2px;" width="22.3" height="22.3" viewBox="0 0 24 24"><path fill="#333" d="M23 8c0 1.1-.9 2-2 2-.18 0-.35-.02-.51-.07l-3.56 3.55c.05.16.07.34.07.52 0 1.1-.9 2-2 2s-2-.9-2-2c0-.18.02-.36.07-.52l-2.55-2.55c-.16.05-.34.07-.52.07s-.36-.02-.52-.07l-4.55 4.56c.05.16.07.33.07.51 0 1.1-.9 2-2 2s-2-.9-2-2 .9-2 2-2c.18 0 .35.02.51.07l4.56-4.55C8.02 9.36 8 9.18 8 9c0-1.1.9-2 2-2s2 .9 2 2c0 .18-.02.36-.07.52l2.55 2.55c.16-.05.34-.07.52-.07s.36.02.52.07l3.55-3.56C19.02 8.35 19 8.18 19 8c0-1.1.9-2 2-2s2 .9 2 2z"/></svg>
<div class="t" style="left:783.20px;top:517.79px;line-height:22px;font-size:17.9px;font-weight:400;color:#333;-webkit-text-stroke:0.55px #333;letter-spacing:0.150px;">temperature</div>
<svg style="position:absolute;left:902px;top:517px;" width="24" height="24" viewBox="0 0 24 24"><path fill="#333" d="M3 17.25V21h3.75L17.81 9.94l-3.75-3.75L3 17.25zM20.71 7.04c.39-.39.39-1.02 0-1.41l-2.34-2.34c-.39-.39-1.02-.39-1.41 0l-1.83 1.83 3.75 3.75 1.83-1.83z"/></svg>
<svg style="position:absolute;left:938px;top:517px;" width="24" height="24" viewBox="0 0 24 24"><path fill="#333" d="M19 6.41L17.59 5 12 10.59 6.41 5 5 6.41 10.59 12 5 17.59 6.41 19 12 13.41 17.59 19 19 17.59 13.41 12z"/></svg>
<svg style="position:absolute;left:746px;top:538.2px;overflow:visible;" width="219" height="6" viewBox="0 0 219 6"><path d="M1.5 1.8 Q 98.55 1.2000000000000002 219 3.6 Q 98.55 4.0 1.5 4.2 A 1.2 1.2 0 0 1 1.5 1.8 Z" fill="#fdc43b"/></svg>
<div style="position:absolute;left:1075px;top:510.5px;width:221px;height:49px;border:1px solid #dcdcdc;border-radius:6px"></div>
<div class="t" style="left:1090.00px;top:522.62px;line-height:23px;font-size:18.7px;font-weight:400;color:#111;">${entityName} tempera</div>
<svg style="position:absolute;left:1083px;top:545.6px;overflow:visible;" width="209" height="6" viewBox="0 0 209 6"><path d="M1.5 1.8 Q 94.05 1.2000000000000002 209 3.6 Q 94.05 4.0 1.5 4.2 A 1.2 1.2 0 0 1 1.5 1.8 Z" fill="#fdc43b"/></svg>
<div style="position:absolute;left:1311.3px;top:510.5px;width:124px;height:49px;border:1px solid #dcdcdc;border-radius:6px"></div>
<div class="t" style="left:1326.70px;top:523.56px;line-height:22px;font-size:18px;font-weight:400;color:#111;">default</div>
<svg style="position:absolute;left:1403px;top:523px;" width="24" height="24" viewBox="0 0 24 24"><path fill="#666" d="M7 10l5 5 5-5z"/></svg>
<div style="position:absolute;left:1451.3px;top:510.5px;width:49.2px;height:49px;border:1px solid #dcdcdc;border-radius:6px"></div>
<div style="position:absolute;left:1461px;top:520px;width:30px;height:30px;background:#0091ee;border-radius:5px"></div>
<div style="position:absolute;left:1516.3px;top:510.5px;width:99px;height:49px;border:1px solid #dcdcdc;border-radius:6px"></div>
<div class="t" style="left:1531.70px;top:523.56px;line-height:22px;font-size:18px;font-weight:400;color:#111;">°C</div>
<div style="position:absolute;left:1632px;top:510.5px;width:72.5px;height:49px;border:1px solid #dcdcdc;border-radius:6px"></div>
<div class="t" style="left:1647.30px;top:523.56px;line-height:22px;font-size:18px;font-weight:400;color:#111;">0</div>
<div style="position:absolute;left:1682px;top:523px;width:19px;height:24px;background:#fafafa"></div>
<svg style="position:absolute;left:1682px;top:523px;overflow:visible;" width="19" height="24" viewBox="0 0 19 24"><path d="M4.5 8.3 L9.5 3 L14.5 8.3Z M4.5 16 L9.5 21.2 L14.5 16Z" fill="#777"/></svg>
<svg style="position:absolute;left:1730px;top:519.5px;" width="31" height="31" viewBox="0 0 24 24"><path fill="#9e9e9e" d="M19.14 12.94c.04-.3.06-.61.06-.94 0-.32-.02-.64-.07-.94l2.03-1.58c.18-.14.23-.41.12-.61l-1.92-3.32c-.12-.22-.37-.29-.59-.22l-2.39.96c-.5-.38-1.03-.7-1.62-.94l-.36-2.54c-.04-.24-.24-.41-.48-.41h-3.84c-.24 0-.43.17-.47.41l-.36 2.54c-.59.24-1.13.57-1.62.94l-2.39-.96c-.22-.08-.47 0-.59.22L2.74 8.87c-.12.21-.08.47.12.61l2.03 1.58c-.05.3-.09.63-.09.94s.02.64.07.94l-2.03 1.58c-.18.14-.23.41-.12.61l1.92 3.32c.12.22.37.29.59.22l2.39-.96c.5.38 1.03.7 1.62.94l.36 2.54c.05.24.24.41.48.41h3.84c.24 0 .44-.17.47-.41l.36-2.54c.59-.24 1.13-.56 1.62-.94l2.39.96c.22.08.47 0 .59-.22l1.92-3.32c.12-.22.07-.47-.12-.61l-2.01-1.58zM12 15.6c-1.98 0-3.6-1.62-3.6-3.6s1.62-3.6 3.6-3.6 3.6 1.62 3.6 3.6-1.62 3.6-3.6 3.6z"/></svg>
<svg style="position:absolute;left:1781px;top:520.5px;" width="30" height="30" viewBox="0 0 24 24"><path fill="#9e9e9e" d="M6 19c0 1.1.9 2 2 2h8c1.1 0 2-.9 2-2V7H6v12zM19 4h-3.5l-1-1h-5l-1 1H5v2h14V4z"/></svg>
<div style="position:absolute;left:712.5px;top:596.5px;width:127px;height:44px;border:1px solid #dcdcdc;border-radius:6px"></div>
<div class="t" style="left:732.00px;top:606.04px;line-height:23px;font-size:18.06px;font-weight:400;color:#00695c;-webkit-text-stroke:0.55px #00695c;letter-spacing:0.150px;">Add series</div>
<div style="position:absolute;left:691px;top:682px;width:1202px;height:294px;border:1px solid #e0e0e0;border-radius:8px"></div>
<div style="position:absolute;left:684px;top:675px;width:1216px;height:307px;border:3.2px solid #fdc43b;border-radius:9px;box-shadow:0 0 6px 2px rgba(251,193,58,0.28), inset 0 0 5px 2px rgba(251,193,58,0.18)"></div>
<div class="t" style="left:712.00px;top:703.27px;line-height:24px;font-size:19.4px;font-weight:400;color:#111;-webkit-text-stroke:0.644167671515781px #111;letter-spacing:-0.051px;">Y axes</div>
<svg style="position:absolute;left:707px;top:724.9px;overflow:visible;" width="78" height="6" viewBox="0 0 78 6"><path d="M1.5 1.7 Q 35.1 1.1 78 3.6 Q 35.1 4.1 1.5 4.3 A 1.3 1.3 0 0 1 1.5 1.7 Z" fill="#fdc43b"/></svg>
<div style="position:absolute;left:712.5px;top:747.5px;width:1159.5px;height:141px;border:1px solid #e0e0e0;border-radius:8px"></div>
<div style="position:absolute;left:713px;top:807px;width:1158px;height:1px;background:#e0e0e0"></div>
<div class="t" style="left:728.50px;top:766.61px;line-height:21px;font-size:17px;font-weight:400;color:#757575;">Id</div>
<div class="t" style="left:818.50px;top:766.61px;line-height:21px;font-size:17px;font-weight:400;color:#757575;">Show</div>
<div class="t" style="left:883.50px;top:766.61px;line-height:21px;font-size:17px;font-weight:400;color:#757575;">Label</div>
<div class="t" style="left:1122.40px;top:766.61px;line-height:21px;font-size:17px;font-weight:400;color:#757575;">Position</div>
<div class="t" style="left:1286.80px;top:766.61px;line-height:21px;font-size:17px;font-weight:400;color:#757575;">Min</div>
<div class="t" style="left:1401.50px;top:766.61px;line-height:21px;font-size:17px;font-weight:400;color:#757575;">Max</div>
<div class="t" style="left:1516.30px;top:766.61px;line-height:21px;font-size:17px;font-weight:400;color:#757575;">Units</div>
<div class="t" style="left:1631.60px;top:766.61px;line-height:21px;font-size:17px;font-weight:400;color:#757575;">Decimals</div>
<div class="t" style="left:728.60px;top:835.29px;line-height:22px;font-size:17.92px;font-weight:400;color:#333;-webkit-text-stroke:0.55px #333;letter-spacing:0.150px;">default</div>
<div style="position:absolute;left:832px;top:837px;width:22px;height:22px;background:#ff5722;border-radius:3px"></div>
<svg style="position:absolute;left:832px;top:837px;overflow:visible;" width="22" height="22" viewBox="0 0 22 22"><path d="M3.8 12.4 L8.3 16.7 L18.8 6.2" fill="none" stroke="#fff" stroke-width="2.6"/></svg>
<div style="position:absolute;left:883.3px;top:823.5px;width:223px;height:49px;border:1px solid #dcdcdc;border-radius:6px"></div>
<div class="t" style="left:898.60px;top:835.69px;line-height:23px;font-size:18.5px;font-weight:400;color:#111;">Temperature</div>
<svg style="position:absolute;left:891px;top:858.3px;overflow:visible;" width="132" height="6" viewBox="0 0 132 6"><path d="M1.5 1.8 Q 59.4 1.2000000000000002 132 3.6 Q 59.4 4.0 1.5 4.2 A 1.2 1.2 0 0 1 1.5 1.8 Z" fill="#fdc43b"/></svg>
<div style="position:absolute;left:1122.4px;top:823.5px;width:148px;height:49px;border:1px solid #dcdcdc;border-radius:6px"></div>
<div class="t" style="left:1137.30px;top:836.76px;line-height:22px;font-size:18px;font-weight:400;color:#111;">Left</div>
<svg style="position:absolute;left:1238px;top:836px;" width="24" height="24" viewBox="0 0 24 24"><path fill="#666" d="M7 10l5 5 5-5z"/></svg>
<div style="position:absolute;left:1286.4px;top:823.5px;width:99px;height:49px;border:1px solid #dcdcdc;border-radius:6px"></div>
<div class="t" style="left:1301.80px;top:836.76px;line-height:22px;font-size:18px;font-weight:400;color:#111;">15</div>
<svg style="position:absolute;left:1296px;top:858.5px;overflow:visible;" width="41.40000000000009" height="6" viewBox="0 0 41.40000000000009 6"><path d="M1.5 1.9 Q 18.63000000000004 1.2999999999999998 41.40000000000009 3.6 Q 18.63000000000004 3.8999999999999995 1.5 4.1 A 1.1 1.1 0 0 1 1.5 1.9 Z" fill="#fdc43b"/></svg>
<div style="position:absolute;left:1362px;top:836px;width:19px;height:24px;background:#fafafa"></div>
<svg style="position:absolute;left:1362px;top:836px;overflow:visible;" width="19" height="24" viewBox="0 0 19 24"><path d="M4.5 8.3 L9.5 3 L14.5 8.3Z M4.5 16 L9.5 21.2 L14.5 16Z" fill="#777"/></svg>
<div style="position:absolute;left:1401.5px;top:823.5px;width:99px;height:49px;border:1px solid #dcdcdc;border-radius:6px"></div>
<div class="t" style="left:1416.40px;top:836.76px;line-height:22px;font-size:18px;font-weight:400;color:#111;">35</div>
<svg style="position:absolute;left:1411px;top:858.5px;overflow:visible;" width="41" height="6" viewBox="0 0 41 6"><path d="M1.5 1.9 Q 18.45 1.2999999999999998 41 3.6 Q 18.45 3.8999999999999995 1.5 4.1 A 1.1 1.1 0 0 1 1.5 1.9 Z" fill="#fdc43b"/></svg>
<div style="position:absolute;left:1477px;top:836px;width:19px;height:24px;background:#fafafa"></div>
<svg style="position:absolute;left:1477px;top:836px;overflow:visible;" width="19" height="24" viewBox="0 0 19 24"><path d="M4.5 8.3 L9.5 3 L14.5 8.3Z M4.5 16 L9.5 21.2 L14.5 16Z" fill="#777"/></svg>
<div style="position:absolute;left:1516.3px;top:823.5px;width:99px;height:49px;border:1px solid #dcdcdc;border-radius:6px"></div>
<div class="t" style="left:1531.70px;top:836.76px;line-height:22px;font-size:18px;font-weight:400;color:#111;">°C</div>
<svg style="position:absolute;left:1526px;top:858.5px;overflow:visible;" width="43" height="6" viewBox="0 0 43 6"><path d="M1.5 1.9 Q 19.35 1.2999999999999998 43 3.6 Q 19.35 3.8999999999999995 1.5 4.1 A 1.1 1.1 0 0 1 1.5 1.9 Z" fill="#fdc43b"/></svg>
<div style="position:absolute;left:1632px;top:823.5px;width:72.5px;height:49px;border:1px solid #dcdcdc;border-radius:6px"></div>
<div class="t" style="left:1647.30px;top:836.76px;line-height:22px;font-size:18px;font-weight:400;color:#111;">0</div>
<div style="position:absolute;left:1682px;top:836px;width:19px;height:24px;background:#fafafa"></div>
<svg style="position:absolute;left:1682px;top:836px;overflow:visible;" width="19" height="24" viewBox="0 0 19 24"><path d="M4.5 8.3 L9.5 3 L14.5 8.3Z M4.5 16 L9.5 21.2 L14.5 16Z" fill="#777"/></svg>
<svg style="position:absolute;left:1730px;top:832.5px;" width="31" height="31" viewBox="0 0 24 24"><path fill="#9e9e9e" d="M19.14 12.94c.04-.3.06-.61.06-.94 0-.32-.02-.64-.07-.94l2.03-1.58c.18-.14.23-.41.12-.61l-1.92-3.32c-.12-.22-.37-.29-.59-.22l-2.39.96c-.5-.38-1.03-.7-1.62-.94l-.36-2.54c-.04-.24-.24-.41-.48-.41h-3.84c-.24 0-.43.17-.47.41l-.36 2.54c-.59.24-1.13.57-1.62.94l-2.39-.96c-.22-.08-.47 0-.59.22L2.74 8.87c-.12.21-.08.47.12.61l2.03 1.58c-.05.3-.09.63-.09.94s.02.64.07.94l-2.03 1.58c-.18.14-.23.41-.12.61l1.92 3.32c.12.22.37.29.59.22l2.39-.96c.5.38 1.03.7 1.62.94l.36 2.54c.05.24.24.41.48.41h3.84c.24 0 .44-.17.47-.41l.36-2.54c.59-.24 1.13-.56 1.62-.94l2.39.96c.22.08.47 0 .59-.22l1.92-3.32c.12-.22.07-.47-.12-.61l-2.01-1.58zM12 15.6c-1.98 0-3.6-1.62-3.6-3.6s1.62-3.6 3.6-3.6 3.6 1.62 3.6 3.6-1.62 3.6-3.6 3.6z"/></svg>
<div style="position:absolute;left:712.5px;top:909.5px;width:126px;height:44px;border:1px solid #dcdcdc;border-radius:6px"></div>
<div class="t" style="left:732.00px;top:920.58px;line-height:22px;font-size:17.93px;font-weight:400;color:#00695c;-webkit-text-stroke:0.55px #00695c;letter-spacing:0.150px;">Add Y axis</div>
<div style="position:absolute;left:691px;top:995px;width:1202px;height:65px;overflow:hidden"><div style="width:1202px;height:120px;border:1px solid #e0e0e0;border-radius:8px"></div></div>
<div class="t" style="left:712.50px;top:1015.32px;line-height:25px;font-size:19.98px;font-weight:400;color:#111;-webkit-text-stroke:0.644167671515781px #111;letter-spacing:0.150px;">Thresholds</div>
<div style="position:absolute;left:656px;top:527.5px;width:29px;height:3px;background:#fdc43b"></div>
<div style="position:absolute;left:679.5px;top:523.5px;width:11px;height:11px;background:#fdc43b;border-radius:50%"></div>
<div style="position:absolute;left:168.3px;top:457.2px;width:488.5px;height:108px;background:#fdf0dc;border:3px solid #fdc43b;border-radius:11px;box-shadow:0 0 4px rgba(251,193,58,0.5)"></div>
<div class="t" style="left:177.40px;top:460.86px;line-height:35px;font-size:27.8px;font-weight:400;color:#000;">Keep the telemetry key "temperature",</div>
<div class="t" style="left:177.40px;top:493.86px;line-height:35px;font-size:27.8px;font-weight:400;color:#000;">but change the label</div>
<div class="t" style="left:177.40px;top:526.86px;line-height:35px;font-size:27.8px;font-weight:400;color:#000;">to <b>${entityName} temperature</b></div>
<div style="position:absolute;left:192.2px;top:425.3px;width:29.6px;height:35px;background:#fff;border:3px solid #fdc43b;border-radius:9px;box-shadow:0 0 4px rgba(251,193,58,0.5)"></div>
<div class="t" style="left:-293.00px;width:1000px;text-align:center;top:425.26px;line-height:35px;font-size:27.8px;font-weight:400;color:#000;">5</div>
<div style="position:absolute;left:655px;top:841px;width:30px;height:3px;background:#fdc43b"></div>
<div style="position:absolute;left:679.5px;top:837px;width:11px;height:11px;background:#fdc43b;border-radius:50%"></div>
<div style="position:absolute;left:386.9px;top:821px;width:269px;height:40px;background:#fdf0dc;border:3px solid #fdc43b;border-radius:11px;box-shadow:0 0 4px rgba(251,193,58,0.5)"></div>
<div class="t" style="left:394.40px;top:823.66px;line-height:35px;font-size:27.8px;font-weight:400;color:#000;">Configure the Y axis</div>
<div style="position:absolute;left:411px;top:788.3px;width:28px;height:34px;background:#fff;border:3px solid #fdc43b;border-radius:9px;box-shadow:0 0 4px rgba(251,193,58,0.5)"></div>
<div class="t" style="left:-75.00px;width:1000px;text-align:center;top:787.76px;line-height:35px;font-size:27.8px;font-weight:400;color:#000;">6</div>
</body></html>
